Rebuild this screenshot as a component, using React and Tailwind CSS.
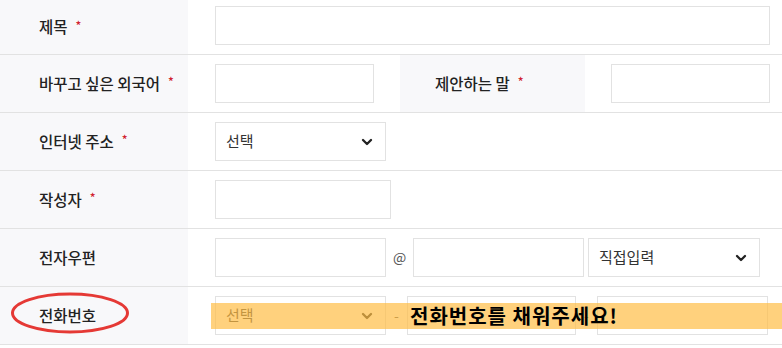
import React from "react";

const font = { fontFamily: '"Noto Sans CJK KR", "Noto Sans", sans-serif' };

function Chevron() {
  return (
    <svg width="16" height="16" viewBox="0 0 24 24" fill="none" stroke="#222" strokeWidth="3.5" strokeLinecap="round" strokeLinejoin="round">
      <path d="m6 9 6 6 6-6" />
    </svg>
  );
}

function Star() {
  return <span className="text-[#d0212d] text-[12px] ml-[8px] -mt-[5px]">*</span>;
}

function Label({ children, req }) {
  return (
    <div className="w-[188px] shrink-0 self-stretch bg-[#f8f8fa] flex items-center pl-[39px] text-[15.5px] font-medium text-[#222]">
      <span>{children}</span>
      {req && <Star />}
    </div>
  );
}

function Input({ w }) {
  return <div className={`h-[39px] border border-[#e2e2e2] bg-white ${w}`} />;
}

function Select({ w, text, muted }) {
  return (
    <div className={`h-[39px] border border-[#e2e2e2] bg-white flex items-center justify-between pl-[10px] pr-[10px] ${w}`}>
      <span className={`text-[15px] ${muted ? "text-[#999]" : "text-[#333]"}`}>{text}</span>
      <Chevron />
    </div>
  );
}

function Row({ children, first }) {
  return (
    <div className={`flex border-b border-[#e2e2e2] ${first ? "h-[55px]" : "h-[58px]"}`}>
      {children}
    </div>
  );
}

export default function App() {
  return (
    <div className="w-[782px] h-[348px] bg-white overflow-hidden" style={font}>
      <Row first>
        <Label req>제목</Label>
        <div className="flex items-start pt-[6px] pl-[27px]">
          <Input w="w-[555px]" />
        </div>
      </Row>
      <Row>
        <Label req>바꾸고 싶은 외국어</Label>
        <div className="flex items-center pl-[27px]">
          <Input w="w-[159px]" />
        </div>
        <div className="ml-[26px] w-[185px] self-stretch bg-[#f8f8fa] flex items-center pl-[35px] text-[15.5px] font-medium text-[#222]">
          <span>제안하는 말</span>
          <Star />
        </div>
        <div className="flex items-center pl-[26px]">
          <Input w="w-[159px]" />
        </div>
      </Row>
      <Row>
        <Label req>인터넷 주소</Label>
        <div className="flex items-center pl-[27px]">
          <Select w="w-[171px]" text="선택" />
        </div>
      </Row>
      <Row>
        <Label req>작성자</Label>
        <div className="flex items-center pl-[27px]">
          <Input w="w-[176px]" />
        </div>
      </Row>
      <Row>
        <Label>전자우편</Label>
        <div className="flex items-center pl-[27px]">
          <Input w="w-[171px]" />
          <span className="w-[27px] text-center text-[14px] text-[#555]">@</span>
          <Input w="w-[171px]" />
          <div className="w-[4px]" />
          <Select w="w-[172px]" text="직접입력" />
        </div>
      </Row>
      <Row>
        <div className="relative flex w-full">
          <Label>전화번호</Label>
          <div className="flex items-center pl-[27px]">
            <Select w="w-[171px]" text="선택" />
            <span className="w-[21px] text-center text-[14px] text-[#555]">-</span>
            <Input w="w-[169px]" />
            <span className="w-[21px] text-center text-[14px] text-[#555]">-</span>
            <Input w="w-[171px]" />
          </div>
          <div className="absolute left-[211px] right-0 top-[16px] h-[26px] bg-[#ffbe46]/70" />
          <div className="absolute left-[410px] top-[16px] h-[26px] flex items-center text-[20px] font-bold tracking-[1px] text-black leading-none">
            전화번호를 채워주세요!
          </div>
          <svg className="absolute left-[10px] top-[5px]" width="120" height="42" viewBox="0 0 120 42">
            <ellipse cx="60" cy="21" rx="57.5" ry="19" fill="none" stroke="#e53935" strokeWidth="3" />
          </svg>
        </div>
      </Row>
    </div>
  );
}
